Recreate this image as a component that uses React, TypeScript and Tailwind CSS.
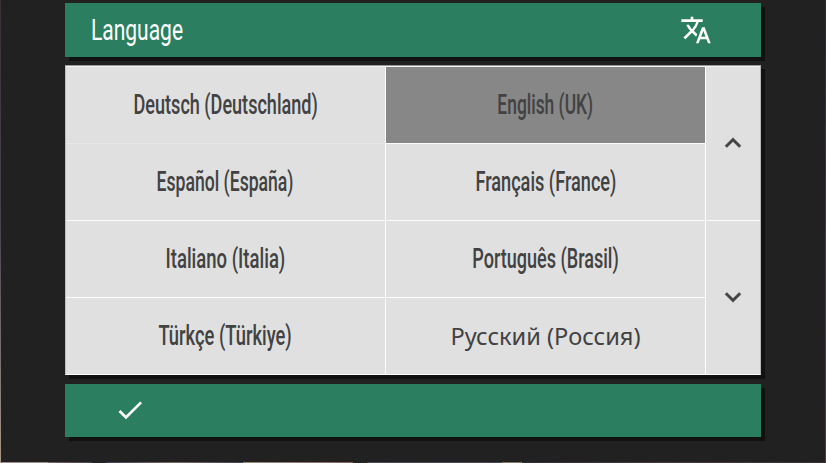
import clsx from 'clsx';

const languages = [
  { label: 'Deutsch (Deutschland)', stretch: 'scale-x-[0.669]', line: 'shadow-[0_1px_0_#e8e8e8]' },
  { label: 'English (UK)', stretch: 'scale-x-[0.645]', selected: true },
  { label: 'Español (España)', stretch: 'scale-x-[0.652]' },
  { label: 'Français (France)', stretch: 'scale-x-[0.672]' },
  { label: 'Italiano (Italia)', stretch: 'scale-x-[0.685]' },
  { label: 'Português (Brasil)', stretch: 'scale-x-[0.668]' },
  { label: 'Türkçe (Türkiye)', stretch: 'scale-x-[0.68]' },
  { label: 'Русский (Россия)', wide: true },
];

const TranslateIcon = () => (
  <svg className="size-8" viewBox="0 0 24 24" fill="currentColor">
    <path d="M12.87 15.07l-2.54-2.51.03-.03A17.52 17.52 0 0 0 14.07 6H17V4h-7V2H8v2H1v2h11.17C11.5 7.92 10.44 9.75 9 11.35 8.07 10.32 7.3 9.19 6.69 8h-2c.73 1.63 1.73 3.17 2.98 4.56l-5.09 5.02L4 19l5-5 3.11 3.11.76-2.04zM18.5 10h-2L12 22h2l1.12-3h4.75L21 22h2l-4.5-12zm-2.62 7l1.62-4.33L19.12 17h-3.24z" />
  </svg>
);

const ArrowIcon = ({ down = false }: { down?: boolean }) => (
  <svg
    className={clsx('size-8', down && 'rotate-180')}
    viewBox="0 0 24 24"
    fill="currentColor"
    stroke="currentColor"
    strokeWidth="0.3"
  >
    <path d="M7.41 15.41L12 10.83l4.59 4.58L18 14l-6-6-6 6z" />
  </svg>
);

const App = () => {
  return (
    <div className="flex h-[463px] w-[826px] flex-col overflow-hidden bg-[#212121] font-['Roboto',sans-serif]">
      <div className="flex h-[462px]">
        {/* slivers of the backdrop left visible around the dialog */}
        <div className="w-px bg-linear-to-b from-[#3a3038] via-[#4b4352] to-[#a89888]" />
        <div className="w-[824px] pl-16 pt-[3px]">
          <div className="w-[696px]">
            <header className="flex h-[54px] items-center justify-between bg-[#2b7f60] pl-[26px] pr-[49px] text-white shadow-[4px_4px_0_#111]">
              <h1 className="origin-left scale-x-[0.7] whitespace-nowrap text-[30px] leading-none">
                Language
              </h1>
              <TranslateIcon />
            </header>

            <main className="mt-2 flex h-[310px] border border-t-[#989898] border-l-[#bdbdbd] border-r-[#b5b5b5] border-b-white bg-[#e0e0e0] text-[#424242] shadow-[4px_4px_0_#111]">
              <div className="grid w-[639px] grid-cols-[319px_319px] grid-rows-[76px_76px_76px_76px] gap-px border-t border-t-[#f5f5f5] bg-[#fcfcfc]">
                {languages.map((language) => (
                  <button
                    key={language.label}
                    className={clsx(
                      'flex items-center justify-center whitespace-nowrap',
                      language.selected ? 'bg-[#878787]' : 'bg-[#e0e0e0]',
                      language.line
                    )}
                  >
                    <span
                      className={clsx(
                        'leading-none',
                        language.wide
                          ? "pt-0.5 font-['Noto_Sans',sans-serif] text-[23.6px]"
                          : 'text-[27px] font-medium',
                        language.stretch
                      )}
                    >
                      {language.label}
                    </span>
                  </button>
                ))}
              </div>
              <div className="flex grow flex-col border-l border-t border-l-white border-t-[#f5f5f5]">
                <button className="flex h-[154px] items-center justify-center border-b border-[#fcfcfc] pb-0.5">
                  <ArrowIcon />
                </button>
                <button className="flex grow items-center justify-center pb-0.5">
                  <ArrowIcon down />
                </button>
              </div>
            </main>

            <footer className="mt-[9px] flex h-[53px] items-center bg-[#2b7f60] pb-px pl-[49px] text-white shadow-[4px_4px_0_#111]">
              <svg className="size-8" viewBox="0 0 24 24" fill="currentColor">
                <path d="M9 16.17L4.83 12l-1.42 1.41L9 19 21 7l-1.41-1.41z" />
              </svg>
            </footer>
          </div>
        </div>
        <div className="w-px bg-linear-to-b from-[#2b2b2b] via-[#403b4a] to-[#4c3b3f]" />
      </div>
      <div className="flex h-px">
        <div className="w-12 bg-[#a28e7c]" />
        <div className="w-11 bg-linear-to-r from-[#86605f] to-[#484050]" />
        <div className="w-3.5 bg-[#242424]" />
        <div className="w-[137px] bg-linear-to-r from-[#40405c] via-[#86665f] to-[#40405c]" />
        <div className="w-[110px] bg-linear-to-r from-[#a58a78] to-[#8a6353]" />
        <div className="w-3.5 bg-[#242424]" />
        <div className="w-[135px] bg-linear-to-r from-[#4b4668] to-[#4c4458]" />
        <div className="w-5 bg-[#94705f]" />
        <div className="grow bg-linear-to-r from-[#302d35] via-[#4b3a40] to-[#3a3034]" />
      </div>
    </div>
  );
};

export default App;
